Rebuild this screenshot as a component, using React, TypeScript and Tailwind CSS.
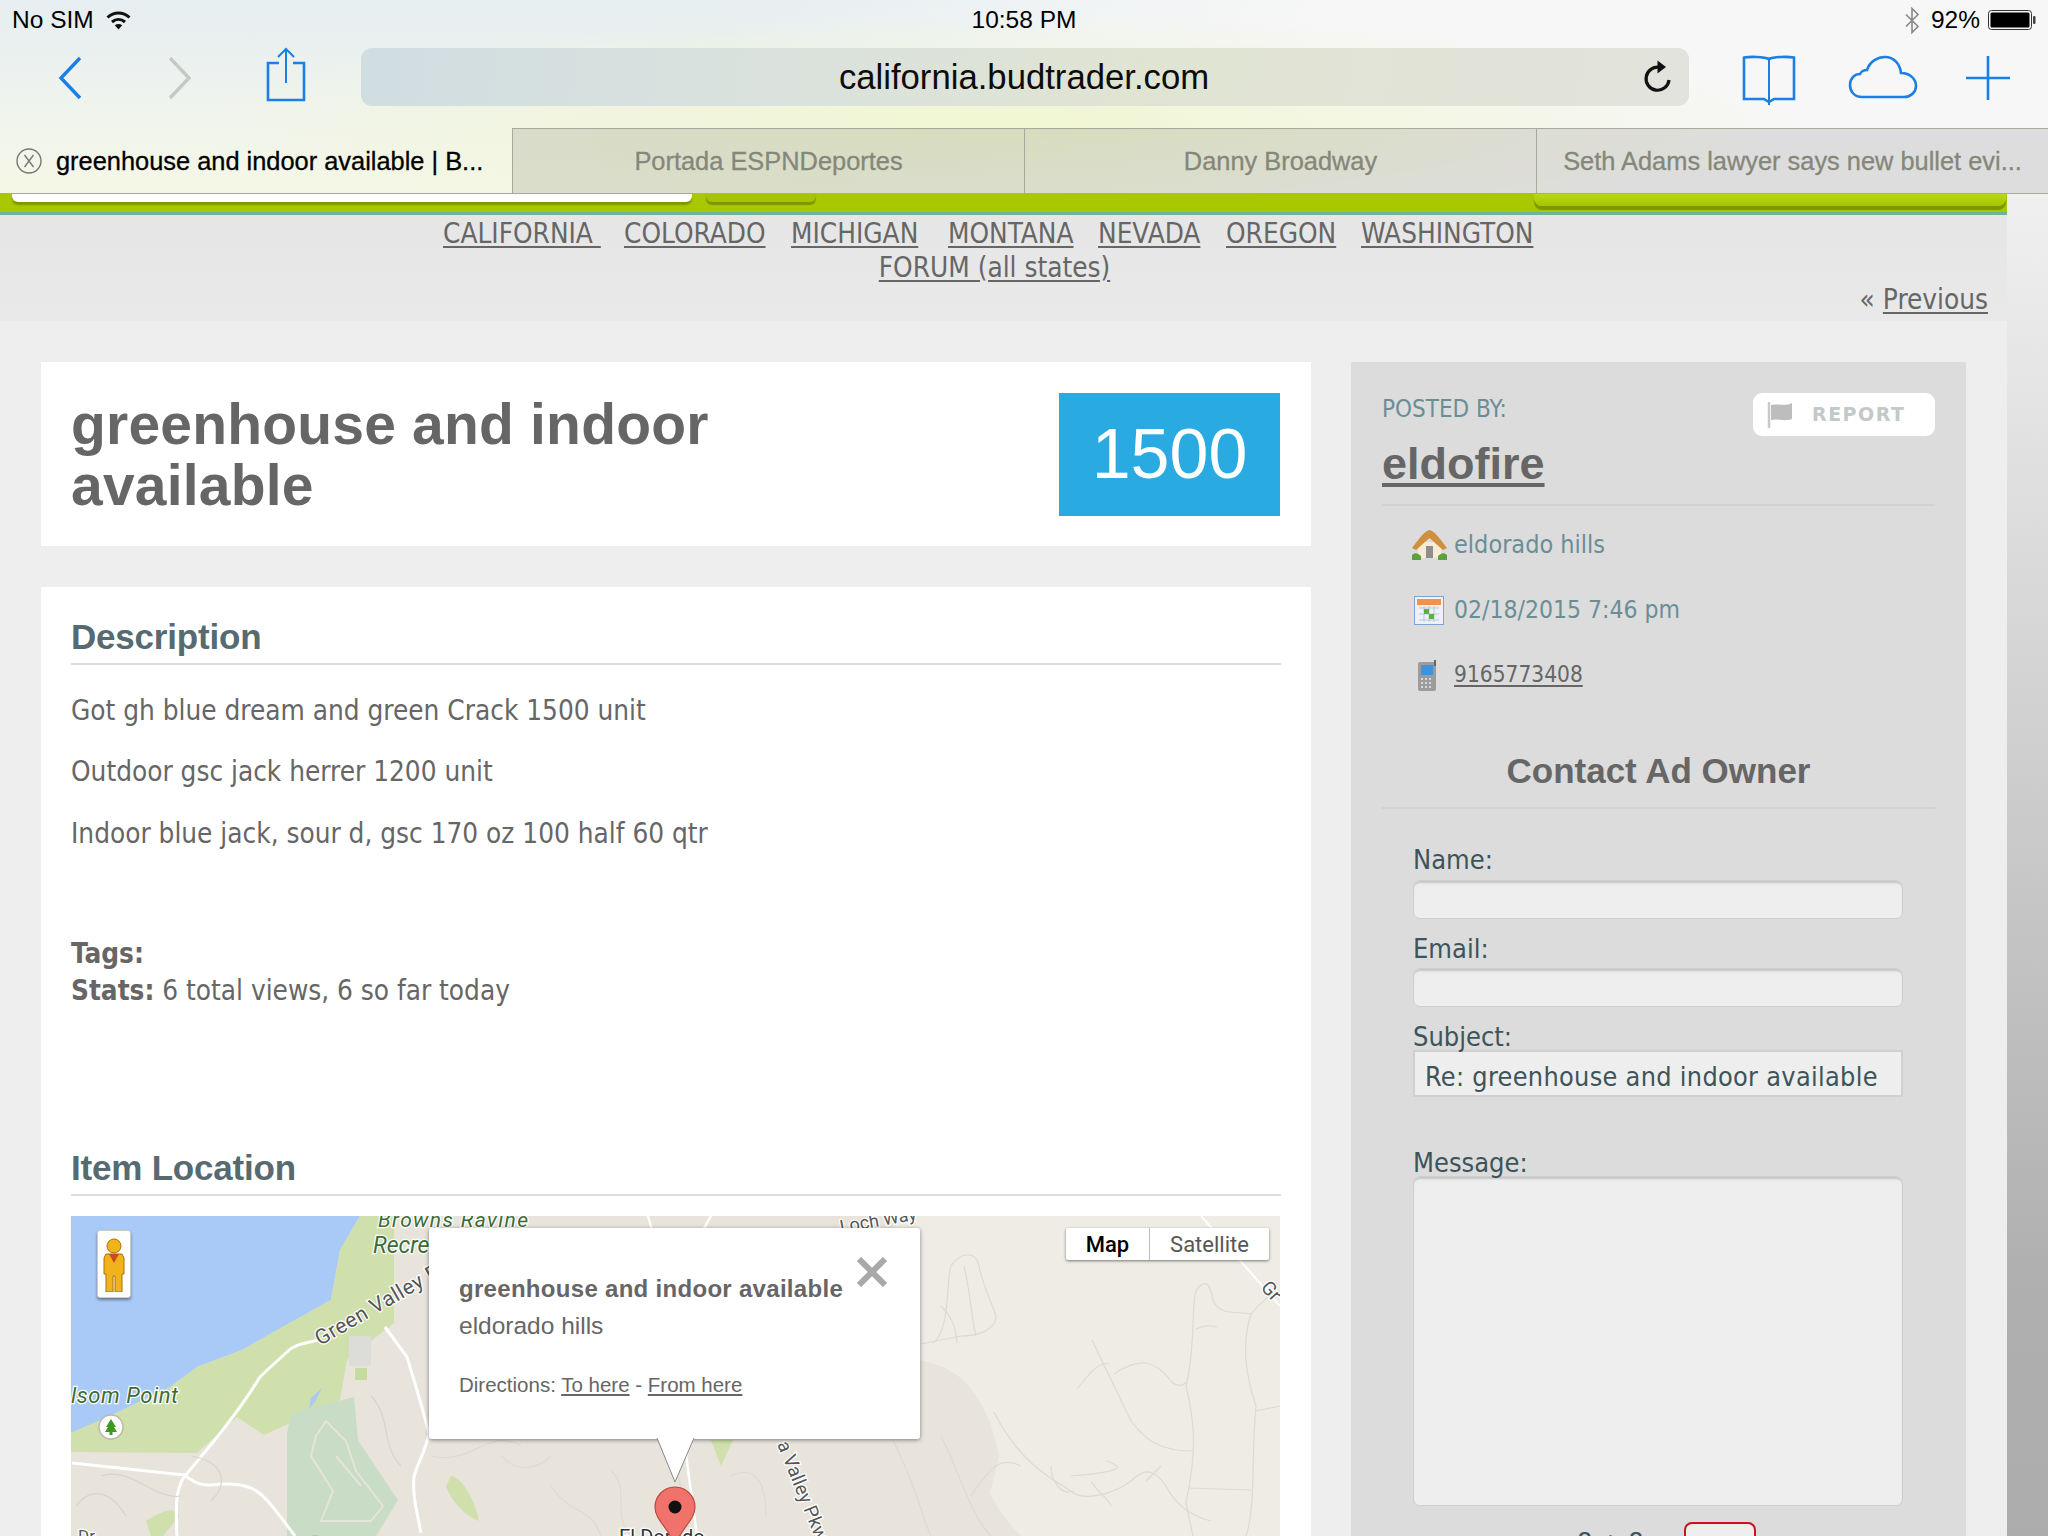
const navStates = [
  { label: "CALIFORNIA ", width: "w-[163px]" },
  { label: "COLORADO", width: "w-[141px]" },
  { label: "MICHIGAN", width: "w-[131px]" },
  { label: "MONTANA", width: "w-[124px]" },
  { label: "NEVADA", width: "w-[102px]" },
  { label: "OREGON", width: "w-[109px]" },
  { label: "WASHINGTON", width: "w-[175px]" },
];

const condensed = "font-['DejaVu_Sans_Condensed','DejaVu_Sans',sans-serif]";

function StatusBar() {
  return (
    <div className="grid h-[40px] grid-cols-3 items-center pl-[12px] pr-[12px] text-[24.5px] text-black">
      <div className="flex items-center gap-[12px]">
        <span>No SIM</span>
        <svg width="25" height="19" viewBox="0 0 25 19" fill="none" stroke="#111" strokeWidth="3">
          <path d="M1.5 6.5C8 0.5 17 0.5 23.5 6.5" />
          <path d="M6 11C10 7.5 15 7.5 19 11" />
          <path d="M12.5 18.5L8.8 14.3C11 12.7 14 12.7 16.2 14.3Z" fill="#111" stroke="none" />
        </svg>
      </div>
      <div className="text-center font-medium">10:58 PM</div>
      <div className="flex items-center justify-end gap-[12px]">
        <svg width="16" height="27" viewBox="0 0 16 27" fill="none" stroke="#888" strokeWidth="1.6">
          <path d="M2 7.5L14 19.5L8 25.5V1.5L14 7.5L2 19.5" />
        </svg>
        <span className="-ml-[1px]">92%</span>
        <svg width="48" height="20" viewBox="0 0 48 20" className="-ml-[4px]">
          <rect x="0.5" y="0.5" width="43" height="19" rx="3" fill="none" stroke="#333" />
          <rect x="2.5" y="2.5" width="39" height="15" rx="1.5" fill="#000" />
          <rect x="45" y="6" width="2.5" height="8" rx="1" fill="#444" />
        </svg>
      </div>
    </div>
  );
}

function Toolbar() {
  return (
    <div className="flex h-[88px] items-start pt-[8px]">
      <svg width="24" height="44" viewBox="0 0 24 44" fill="none" stroke="#1a7fe6" strokeWidth="3.4" className="ml-[58px] mt-[8px] shrink-0">
        <path d="M22 2L3 22L22 42" />
      </svg>
      <svg width="24" height="44" viewBox="0 0 24 44" fill="none" stroke="#c6c8c6" strokeWidth="3.4" className="ml-[86px] mt-[8px] shrink-0">
        <path d="M2 2L21 22L2 42" />
      </svg>
      <svg width="40" height="55" viewBox="0 0 40 55" fill="none" stroke="#1a7fe6" strokeWidth="2.6" className="ml-[74px] shrink-0 -mt-[1px]">
        <path d="M13 16H2V53H38V16H27" />
        <path d="M20 36V2M12 10L20 2L28 10" strokeWidth="2" />
      </svg>
      <div className="ml-[55px] flex h-[58px] w-[1328px] shrink-0 items-center rounded-[11px] bg-[linear-gradient(100deg,#d0dde1_0%,#dbe2dc_35%,#e0e4d2_60%,#e2e3dc_100%)]">
        <div className="ml-[477px] w-[372px] whitespace-nowrap text-center text-[34.7px] leading-none text-[#0c0c0c]">california.budtrader.com</div>
        <svg width="30" height="34" viewBox="0 0 30 34" fill="none" stroke="#111" strokeWidth="3.2" className="ml-[433px] shrink-0">
          <path d="M17 7.5A11.5 11.5 0 1 0 26 20" />
          <path d="M14.5 0.5L23 7L14.5 13.5Z" fill="#111" stroke="none" />
        </svg>
      </div>
      <svg width="54" height="50" viewBox="0 0 54 50" fill="none" stroke="#1a7fe6" strokeWidth="2.6" className="ml-[53px] mt-[7px] shrink-0">
        <path d="M27 4C22 1.5 8 1.5 2 2.5V44H22L27 47L32 44H52V2.5C46 1.5 32 1.5 27 4Z" />
        <path d="M27 4V50" strokeWidth="2" />
      </svg>
      <svg width="70" height="44" viewBox="0 0 70 44" fill="none" stroke="#1a7fe6" strokeWidth="2.6" className="ml-[52px] mt-[7px] shrink-0">
        <path d="M14 42C6 42 2 36 2 30C2 23 7 19 12 19C13 17 15 15 19 15C22 6 30 2 37 2C46 2 52 9 53 18C62 18 68 24 68 31C68 37 63 42 56 42Z" />
      </svg>
      <svg width="44" height="44" viewBox="0 0 44 44" fill="none" stroke="#1a7fe6" strokeWidth="2.6" className="ml-[48px] mt-[8px] shrink-0">
        <path d="M22 0V44M0 22H44" />
      </svg>
    </div>
  );
}

function TabBar() {
  const others = ["Portada ESPNDeportes", "Danny Broadway", "Seth Adams lawyer says new bullet evi..."];
  return (
    <div className="flex h-[66px] text-[25.4px] [-webkit-text-stroke:0.3px]">
      <div className="flex h-full w-[512px] shrink-0 items-center border-b border-[#a8a8a0] pl-[16px] pt-[1px] text-black">
        <svg width="26" height="26" viewBox="0 0 26 26" fill="none" stroke="#777" strokeWidth="1.4" className="shrink-0">
          <circle cx="13" cy="13" r="12" />
          <path d="M8.5 7L17.5 19M17.5 7L8.5 19" />
        </svg>
        <span className="ml-[14px] whitespace-nowrap">greenhouse and indoor available | B...</span>
      </div>
      {others.map((title) => (
        <div key={title} className="flex h-full w-[512px] shrink-0 items-center justify-center border-b border-l border-t border-b-[#a8a8a0] border-l-[#a8a89c] border-t-[#a8a89c] bg-black/[0.1] text-[#85877a]">
          <span className="whitespace-nowrap">{title}</span>
        </div>
      ))}
    </div>
  );
}

function SiteHeader() {
  return (
    <div className="h-[21px] w-full border-b-[3px] border-b-[#6fb39a] bg-[#aac800]">
      <div className="flex items-start">
        <div className="ml-[12px] h-[8px] w-[680px] rounded-b-[6px] bg-white shadow-[0_3px_2px_#7f9600]" />
        <div className="ml-[14px] h-[8px] w-[110px] rounded-b-[6px] bg-[#a6c400] shadow-[0_3px_1px_#7f9600]" />
        <div className="ml-[718px] h-[12px] w-[472px] rounded-b-[8px] bg-[linear-gradient(#b8da10,#a6c400)] shadow-[0_4px_1px_#7f9600]" />
      </div>
    </div>
  );
}

function StateNav() {
  return (
    <div className={`h-[106px] bg-[linear-gradient(#e6e6e6,#e9e9e9)] text-[27.7px] text-[#666] ${condensed}`}>
      <div className="flex h-[37px] items-center pl-[443px] leading-none">
        {navStates.map((s, i) => (
          <a key={s.label} className={`${s.width} ${i === 0 ? "mr-[18px]" : i === navStates.length - 1 ? "" : "mr-[26px]"} shrink-0 whitespace-pre underline underline-offset-[3px]`}>
            {s.label}
          </a>
        ))}
      </div>
      <div className="flex h-[31px] items-center justify-center pr-[18px] leading-none">
        <a className="underline underline-offset-[3px]">FORUM (all states)</a>
      </div>
      <div className="flex items-center justify-end pr-[19px] pt-[3px] leading-none">
        <span>« </span>
        <a className="ml-[8px] underline underline-offset-[3px]">Previous</a>
      </div>
    </div>
  );
}

function SectionTitle({ children }: { children: string }) {
  return (
    <h2 className="border-b-2 border-[#dddddd] pb-[2px] text-[35px] font-bold leading-[48px] tracking-[-0.2px] text-[#566a70]">{children}</h2>
  );
}

function MapCanvas() {
  return (
    <svg width="1209" height="320" viewBox="0 0 1209 320" className="block font-['Roboto',sans-serif]">
      <rect width="1209" height="320" fill="#efece5" />
      <path d="M0 0H820L848 144C880 150 895 165 901 174C920 200 925 225 928 241L919 277Q930 300 950 320H0Z" fill="#e8e4dc" />
      <path d="M0 0H289L269 34L260 84L224 104L171 134L126 151L99 171L37 201L0 217Z" fill="#a9c9f6" />
      <path d="M289 0H323V107L276 144L269 184L193 219L166 201L126 237L0 236V217L37 201L99 171L126 151L171 134L224 104L260 84L269 34Z" fill="#cfe0ac" />
      <path d="M216 217L220 197L283 181L287 224L327 284L305 320H216Z" fill="#c9dcc6" />
      <path d="M380 260C392 262 404 285 408 305C394 300 380 285 375 270Z" fill="#cfe0ac" />
      <path d="M75 305C90 295 105 290 108 300L92 320H80Z" fill="#cfe0ac" />
      <path d="M640 224H662L650 250Z" fill="#cfe0ac" />
      <path d="M247 124C232 128 224 128 216 136C205 146 195 155 189 161C165 200 135 235 113 261C106 272 104 284 106 320" fill="none" stroke="#fff" strokeWidth="3" />
      <path d="M1 247L113 259C122 265 126 269 140 269C155 267 170 268 180 272C195 279 205 295 224 320" fill="none" stroke="#fff" strokeWidth="3" />
      <path d="M314 111L336 141C345 170 352 195 358 217C355 235 345 250 343 261C341 280 347 300 350 317" fill="none" stroke="#fff" strokeWidth="3" />
      <path d="M577 0L581 14M640 0L632 14M613 224L626 320" fill="none" stroke="#fff" strokeWidth="2.5" />
      <path d="M1130 0L1209 90" fill="none" stroke="#fff" strokeWidth="2" />
      <g fill="none" stroke="#e6e3db" strokeWidth="2">
        <path d="M245 220L240 240L262 275L250 305H300L312 290L285 255L275 225L255 205Z" />
        <path d="M265 240L290 270" />
      </g>
      <g fill="none" stroke="#dedad2" strokeWidth="1.2">
        <path d="M862 127C880 115 875 60 880 50C890 35 905 35 908 50C912 70 920 85 925 100C925 115 905 120 890 120L850 128" />
        <path d="M870 90C880 100 885 110 886 127M893 50C900 80 900 100 905 120" />
        <path d="M1021 124L1060 205C1075 225 1090 235 1122 235M1006 173C1020 155 1030 145 1038 148M1043 158C1070 140 1085 145 1100 165C1110 175 1115 165 1115 167" />
        <path d="M1122 320L1115 287C1125 240 1125 210 1115 170C1125 130 1120 90 1125 75C1135 60 1140 70 1142 85" />
        <path d="M1142 85C1150 100 1165 95 1180 98C1170 130 1175 160 1185 190C1180 240 1185 290 1175 320" />
        <path d="M1180 98C1190 85 1205 75 1209 75M1185 195L1209 190M1118 272L1180 274M1125 113C1135 108 1140 110 1146 111" />
        <path d="M923 196C950 250 985 265 1000 275C1010 285 1040 280 1060 265C1075 250 1085 255 1095 270C1105 290 1120 300 1140 305" />
        <path d="M1090 250L1075 265M1020 265C1025 275 1040 285 1040 290M980 250C980 265 990 280 1003 275M1035 245C1050 250 1060 255 1000 260" />
        <path d="M820 220C850 280 850 300 860 320M870 220C890 260 900 300 920 320M900 280C920 250 930 240 950 250" />
        <path d="M580 215C620 260 610 300 620 320M540 255C560 270 540 300 560 320M480 270C500 300 520 290 530 320M430 240C450 260 470 250 480 240" />
        <path d="M360 240C400 250 420 210 450 230" />
        <path d="M660 260C680 250 695 260 695 300" />
      </g>
      <g fill="none" stroke="#d8d4cb" strokeWidth="1.2">
        <path d="M30 260C60 250 85 285 110 280M5 290C20 270 40 275 55 300M120 240C150 245 160 265 140 285" />
        <path d="M300 180C320 200 310 230 330 250" />
      </g>
      <path d="M278 120H300V150H278Z" fill="#dcdcd8" />
      <path d="M284 152H296V164H284Z" fill="#c6dc9e" />
      <path d="M238 193L244 186L251 172L240 182Z" fill="#a9c9f6" />
      <g fontFamily="Roboto, sans-serif" stroke="#fff" strokeWidth="2.5" paintOrder="stroke">
        <text x="307" y="11" fontSize="21" fill="#3d6b35" fontStyle="italic" textLength="150">Browns Ravine</text>
        <text x="302" y="37" fontSize="23" fill="#3d6b35" fontStyle="italic">Recre</text>
        <text x="0" y="187" fontSize="22" fill="#3d6b35" fontStyle="italic" textLength="107">lsom Point</text>
        <text x="7" y="326" fontSize="17" fill="#555">Dr</text>
        <text x="249" y="130" fontSize="21" fill="#555" transform="rotate(-30 249 130)" letterSpacing="0.5">Green Valley P</text>
        <text x="770" y="17" fontSize="18" fill="#555" transform="rotate(-10 770 17)">Loch Way</text>
        <text x="706" y="228" fontSize="19" fill="#555" transform="rotate(68 706 228)">a Valley Pkwy</text>
        <text x="1189" y="72" fontSize="19" fill="#555" transform="rotate(48 1189 72)">Gr</text>
        <text x="548" y="328" fontSize="20" fill="#333">El Dorado</text>
      </g>
      <circle cx="40" cy="211" r="12" fill="#fff" stroke="#b9b9a9" strokeWidth="1.5" />
      <path d="M40 203L45 211H43L46 216H34L37 211H35Z" fill="#3e9a1e" />
      <rect x="38.5" y="216" width="3" height="3" fill="#3e9a1e" />
      <circle cx="244" cy="332" r="12" fill="#fff" stroke="#b9b9a9" strokeWidth="1.5" />
      <path d="M240 322L248 322L245 328Z" fill="#6aa51c" />
      <path d="M604 271C592 271 584 281 584 291C584 304 598 312 604 330C610 312 624 304 624 291C624 281 616 271 604 271Z" fill="#f0736b" stroke="#b84a44" strokeWidth="1.2" />
      <circle cx="604" cy="291" r="6.5" fill="#111" />
    </svg>
  );
}

function MapPanel() {
  return (
    <div className="relative mt-[20px] h-[320px] w-[1209px]">
      <MapCanvas />
      <div className="absolute left-[26px] top-[14px] flex h-[68px] w-[34px] justify-center rounded-[3px] border border-[#ccc] bg-white shadow-[0_2px_3px_rgba(0,0,0,0.4)]">
        <svg width="24" height="54" viewBox="0 0 24 54" className="mt-[7px]">
          <circle cx="12" cy="8" r="7" fill="#f1b31c" stroke="#a8700c" strokeWidth="1" />
          <path d="M4 16H20L22 20V36H20V54H13V38H11V54H4V36H2V20Z" fill="#f1b31c" stroke="#a8700c" strokeWidth="1" />
          <path d="M7 16H17L12 25Z" fill="#c84c20" />
        </svg>
      </div>
      <div className="absolute left-[358px] top-[12px] h-[211px] w-[491px] rounded-[3px] bg-white pl-[30px] shadow-[0_1px_4px_rgba(0,0,0,0.45)]">
        <div className="pt-[47px] text-[24px] font-bold leading-[28px] tracking-[0.3px] text-[#666]">greenhouse and indoor available</div>
        <div className="mt-[9px] text-[24.5px] leading-[28px] text-[#666]">eldorado hills</div>
        <div className="mt-[33px] text-[20.5px] leading-[24px] text-[#666]">
          Directions: <a className="underline underline-offset-[2px]">To here</a> - <a className="underline underline-offset-[2px]">From here</a>
        </div>
        <svg width="30" height="30" viewBox="0 0 30 30" stroke="#a9a9a9" strokeWidth="6" className="absolute left-[428px] top-[29px]">
          <path d="M2 2L28 28M28 2L2 28" />
        </svg>
      </div>
      <svg width="44" height="46" viewBox="0 0 44 46" className="absolute left-[583px] top-[222px]">
        <path d="M3 0L21 44L40 0Z" fill="#fff" />
        <path d="M3 0L21 44L40 0" fill="none" stroke="#888" strokeWidth="1" />
      </svg>
      <div className="absolute left-[995px] top-[12px] flex h-[32px] w-[203px] rounded-[2px] bg-white text-[22px] font-['Roboto',sans-serif] shadow-[0_1px_3px_rgba(0,0,0,0.5)]">
        <div className="flex w-[84px] items-center justify-center border-r border-[#bbb] font-medium text-black">Map</div>
        <div className="flex flex-1 items-center justify-center text-[#565656]">Satellite</div>
      </div>
    </div>
  );
}

function Listing() {
  return (
    <div className="w-[1270px] shrink-0">
      <div className="flex h-[184px] items-start justify-between bg-white pl-[30px] pr-[31px] pt-[32px]">
        <h1 className="w-[700px] text-[57px] font-bold leading-[61px] tracking-[0.2px] text-[#666]">greenhouse and indoor available</h1>
        <div className="-mt-[1px] flex h-[123px] w-[221px] items-center justify-center bg-[#29abe2] text-[70px] text-white">1500</div>
      </div>
      <div className="mt-[41px] h-[950px] bg-white px-[30px] pt-[26px]">
        <SectionTitle>Description</SectionTitle>
        <div className={`text-[27.7px] text-[#666] ${condensed}`}>
          <p className="mt-[28px] leading-[36px]">Got gh blue dream and green Crack 1500 unit</p>
          <p className="mt-[25px] leading-[36px]">Outdoor gsc jack herrer 1200 unit</p>
          <p className="mt-[26px] leading-[36px]">Indoor blue jack, sour d, gsc 170 oz 100 half 60 qtr</p>
          <p className="mt-[83px] leading-[37px]"><b>Tags:</b></p>
          <p className="leading-[37px]"><b>Stats:</b> 6 total views, 6 so far today</p>
        </div>
        <div className="mt-[135px]">
          <SectionTitle>Item Location</SectionTitle>
        </div>
        <MapPanel />
      </div>
    </div>
  );
}

function Sidebar() {
  const fieldClass = "block h-[39px] w-[490px] rounded-[7px] border border-[#cfcfcf] bg-[#eeeeee] shadow-[inset_0_3px_2px_-1px_#c4c4c4]";
  return (
    <div className={`ml-[40px] w-[615px] shrink-0 bg-[#dcdcdc] px-[31px] pt-[31px] ${condensed}`}>
      <div className="flex h-[43px] items-start justify-between">
        <span className="text-[24px] leading-[32px] text-[#6a8e96]">POSTED BY:</span>
        <button className="flex h-[43px] w-[182px] items-center rounded-[9px] bg-white pl-[13px] font-['DejaVu_Sans',sans-serif] text-[19px] font-bold tracking-[1.5px] text-[#c3c8c8]">
          <svg width="28" height="30" viewBox="0 0 28 30" className="shrink-0">
            <path d="M3 2V28" stroke="#c9c9c9" strokeWidth="2.5" />
            <path d="M5 5C12 3 18 7 26 3V19C18 22 12 18 5 20Z" fill="#bdbdbd" />
          </svg>
          <span className="ml-[18px]">REPORT</span>
        </button>
      </div>
      <div className="h-[70px] border-b-2 border-[#d2d2d2]">
        <a className="font-['Liberation_Sans',sans-serif] text-[45px] font-bold leading-[56px] text-[#666] underline underline-offset-[4px]">eldofire</a>
      </div>
      <div className="pl-[30px] pt-[20px] text-[25px] text-[#6a8e96]">
        <div className="flex h-[38px] items-center">
          <svg width="35" height="30" viewBox="0 0 35 30" className="shrink-0">
            <path d="M6 12H29V28H6Z" fill="#f6ecd6" />
            <path d="M14 16H21V28H14Z" fill="#8e8e8e" />
            <path d="M0 25C3 22 6 23 9 26V30H0ZM35 25C32 22 29 23 26 26V30H35Z" fill="#5ea03f" />
            <path d="M17.5 0C22 1 25 5 35 18L31 20L17.5 8L4 20L0 18C10 5 13 1 17.5 0Z" fill="#cf8f3e" />
          </svg>
          <span className="ml-[7px]">eldorado hills</span>
        </div>
        <div className="mt-[27px] flex h-[38px] items-center">
          <svg width="30" height="29" viewBox="0 0 30 29" className="ml-[2px] shrink-0">
            <rect x="0.5" y="0.5" width="29" height="28" fill="#eef2f8" stroke="#7ea3d2" />
            <rect x="3" y="3" width="24" height="6" fill="#f0934c" />
            <path d="M5 12H25M5 18H25M5 24H25M10 10V26M15 10V26M20 10V26" stroke="#b9c8d8" />
            <rect x="10" y="13" width="5" height="5" fill="#5eb046" />
            <rect x="15" y="18" width="5" height="5" fill="#5eb046" />
          </svg>
          <span className="ml-[10px] text-[24.5px]">02/18/2015 7:46 pm</span>
        </div>
        <div className="mt-[27px] flex h-[38px] items-center">
          <svg width="20" height="31" viewBox="0 0 20 31" className="ml-[5px] shrink-0">
            <rect x="1" y="2" width="18" height="29" rx="2" fill="#9c9c9c" />
            <rect x="17" y="0" width="2" height="6" fill="#666" />
            <rect x="4" y="5" width="12" height="10" fill="#3f93dd" />
            <path d="M4 19H16M4 23H16M4 27H16" stroke="#d8d8d8" strokeWidth="2" strokeDasharray="2 2" />
          </svg>
          <a className="ml-[17px] text-[22.5px] text-[#666] underline underline-offset-[3px]">9165773408</a>
        </div>
      </div>
      <h3 className="mt-[54px] h-[61px] border-b-2 border-[#d2d2d2] text-center font-['Liberation_Sans',sans-serif] text-[35px] font-bold leading-[46px] text-[#666]">Contact Ad Owner</h3>
      <form className="pl-[31px] text-[27px] leading-[34px] text-[#3c545a]">
        <label className="mt-[34px] block">Name:</label>
        <input className={`mt-[3px] ${fieldClass}`} />
        <label className="mt-[13px] block">Email:</label>
        <input className={`mt-[2px] ${fieldClass}`} />
        <label className="mt-[13px] block">Subject:</label>
        <input readOnly defaultValue="Re: greenhouse and indoor available" className="-mt-[4px] block h-[47px] w-[490px] border-2 border-[#d0d0d0] bg-[#eeeeee] px-[10px] pt-[5px] text-[26.8px] tracking-[0.3px] text-[#3c545a] outline-none" />
        <label className="mt-[49px] block">Message:</label>
        <textarea className="-mt-[4px] block h-[330px] w-[490px] resize-none rounded-[7px] border border-[#cfcfcf] bg-[#eeeeee] shadow-[inset_0_3px_2px_-1px_#c4c4c4]" />
        <div className="mt-[16px] flex items-start">
          <span className="ml-[164px] mt-[4px] text-[#3c545a]">8 + 8 =</span>
          <div className="ml-[12px] h-[40px] w-[72px] rounded-[8px] border-2 border-[#c8141c] bg-[#eeeeee]" />
        </div>
      </form>
    </div>
  );
}

export default function App() {
  return (
    <div className="h-[1536px] w-[2048px] overflow-hidden bg-[#efefef] font-['Liberation_Sans',sans-serif]">
      <div className="h-[194px] bg-[radial-gradient(ellipse_800px_110px_at_1000px_125px,#f1f6d2,transparent),linear-gradient(to_right,transparent_35%,#f7f7f7_65%),linear-gradient(to_bottom,#e6eef1_0%,#eff3ee_50%,#f5f7e6_100%)]">
        <StatusBar />
        <Toolbar />
        <TabBar />
      </div>
      <div className="flex">
        <div className="w-[2007px] shrink-0">
          <SiteHeader />
          <StateNav />
          <div className="flex h-[1215px] items-start overflow-hidden bg-[#eeeeee] pl-[41px] pt-[41px]">
            <Listing />
            <Sidebar />
          </div>
        </div>
        <div className="h-[1342px] flex-1 bg-[linear-gradient(#f0f0f0_0%,#b0b0b0_80%,#acacac_100%)]" />
      </div>
    </div>
  );
}
